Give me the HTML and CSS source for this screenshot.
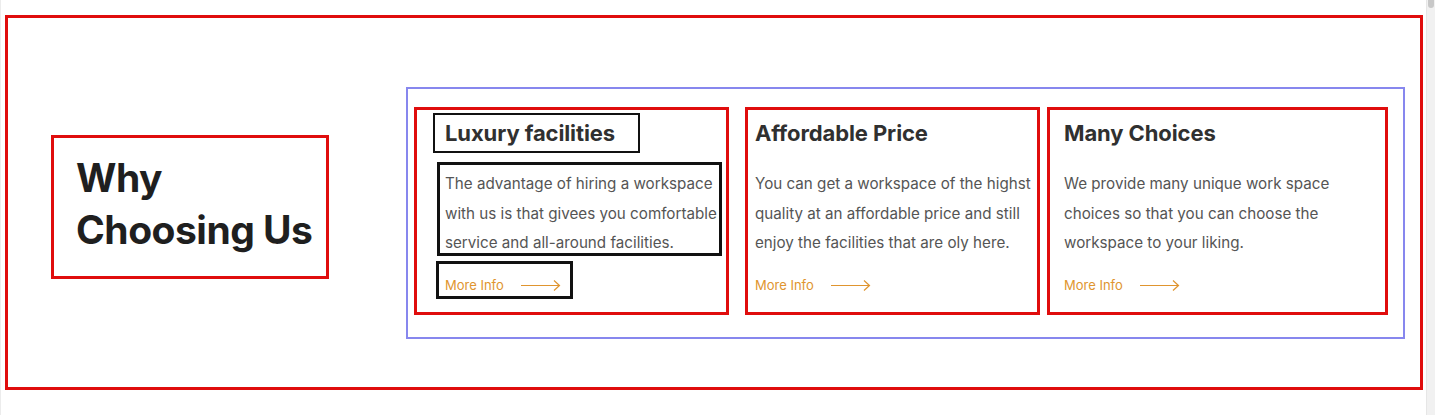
FILE: index.html
```html
<!DOCTYPE html>
<html lang="en">
<head>
<meta charset="utf-8">
<title>Why Choosing Us</title>
<link rel="stylesheet" href="styles.css">
</head>
<body>
<div class="page">
  <main class="main">
    <section class="why">
      <div class="why-title-box">
        <h2 class="why-title">Why<br>Choosing Us</h2>
      </div>
      <div class="cards">
        <article class="card card--one">
          <h3 class="card-title">Luxury facilities</h3>
          <p class="card-text">The advantage of hiring a workspace with us is that givees you comfortable service and all-around facilities.</p>
          <a class="card-link" href="#">More Info
            <svg class="arrow" width="40" height="12" viewBox="0 0 40 12"><path d="M0 6.5H38.5M33 1.5L38.5 6.5L33 11.5" fill="none" stroke="currentColor" stroke-width="1.2"/></svg>
          </a>
        </article>
        <article class="card card--two">
          <h3 class="card-title">Affordable Price</h3>
          <p class="card-text">You can get a workspace of the highst quality at an affordable price and still enjoy the facilities that are oly here.</p>
          <a class="card-link" href="#">More Info
            <svg class="arrow" width="40" height="12" viewBox="0 0 40 12"><path d="M0 6.5H38.5M33 1.5L38.5 6.5L33 11.5" fill="none" stroke="currentColor" stroke-width="1.2"/></svg>
          </a>
        </article>
        <article class="card card--three">
          <h3 class="card-title">Many Choices</h3>
          <p class="card-text">We provide many unique work space choices so that you can choose the workspace to your liking.</p>
          <a class="card-link" href="#">More Info
            <svg class="arrow" width="40" height="12" viewBox="0 0 40 12"><path d="M0 6.5H38.5M33 1.5L38.5 6.5L33 11.5" fill="none" stroke="currentColor" stroke-width="1.2"/></svg>
          </a>
        </article>
      </div>
    </section>
  </main>
  <div class="scrollbar"><div class="scrollbar-thumb"></div></div>
</div>
</body>
</html>
```
FILE: styles.css
```css
* { box-sizing: border-box; }
html, body { margin: 0; padding: 0; background: #fff; }
body { font-family: Inter, "Noto Sans", sans-serif; color: #2b2b2b; }

.page { display: flex; height: 415px; }
.main {
  flex: 1;
  padding: 15px 3px 0 4px;
  border-left: 1px solid #ececec;
}
.scrollbar {
  width: 9px;
  background: #f1f1f1;
  border-left: 1px solid #e6e6e6;
}
.scrollbar-thumb {
  height: 8px;
  margin: 0 1px;
  background: #c8c8c8;
  border-radius: 0 0 4px 4px;
}

.why {
  display: flex;
  align-items: flex-start;
  height: 375px;
  border: 3px solid #e00d0d;
  padding: 69px 15px 0 43px;
}

.why-title-box {
  width: 278px;
  height: 144px;
  margin-top: 48px;
  border: 3px solid #e00d0d;
  padding: 14px 0 0 22px;
}
.why-title {
  margin: 0;
  font-size: 39px;
  line-height: 52px;
  font-weight: 700;
  color: #1f1f1f;
  letter-spacing: -0.5px;
  white-space: nowrap;
}

.cards {
  margin-left: 77px;
  width: 999px;
  height: 252px;
  border: 2px solid #8787ee;
  padding: 18px 0 0 6px;
  display: flex;
  align-items: flex-start;
}

.card {
  border: 3px solid #e00d0d;
  height: 208px;
  padding: 5px 0 0 7px;
  display: flex;
  flex-direction: column;
  align-items: flex-start;
}
.card--one { width: 315px; padding-left: 18px; }
.card--two { width: 295px; margin-left: 16px; padding-left: 7px; }
.card--three { width: 341px; margin-left: 7px; padding-left: 14px; }

.card-title {
  margin: 0;
  height: 36px;
  font-size: 22px;
  line-height: 36px;
  font-weight: 700;
  color: #303030;
  letter-spacing: -0.1px;
}
.card-text {
  width: 282px;
  margin: 14px 0 0;
  padding-top: 4px;
  height: 88px;
  font-size: 15.2px;
  line-height: 29.5px;
  color: #555;
}
.card-link {
  margin-top: 11px;
  height: 32px;
  padding-top: 10px;
  display: flex;
  align-items: center;
  gap: 17px;
  font-size: 13px;
  line-height: 20px;
  color: #e0952f;
  text-decoration: none;
}
.arrow { display: block; }

.card--one .card-title {
  padding: 0 23px 0 10px;
  outline: 2px solid #111;
}
.card--one .card-text {
  width: 279px;
  margin-left: 5px;
  padding-left: 5px;
  outline: 3px solid #111;
}
.card--one .card-link {
  width: 131px;
  margin-left: 4px;
  padding-left: 6px;
  outline: 3px solid #111;
}
```
